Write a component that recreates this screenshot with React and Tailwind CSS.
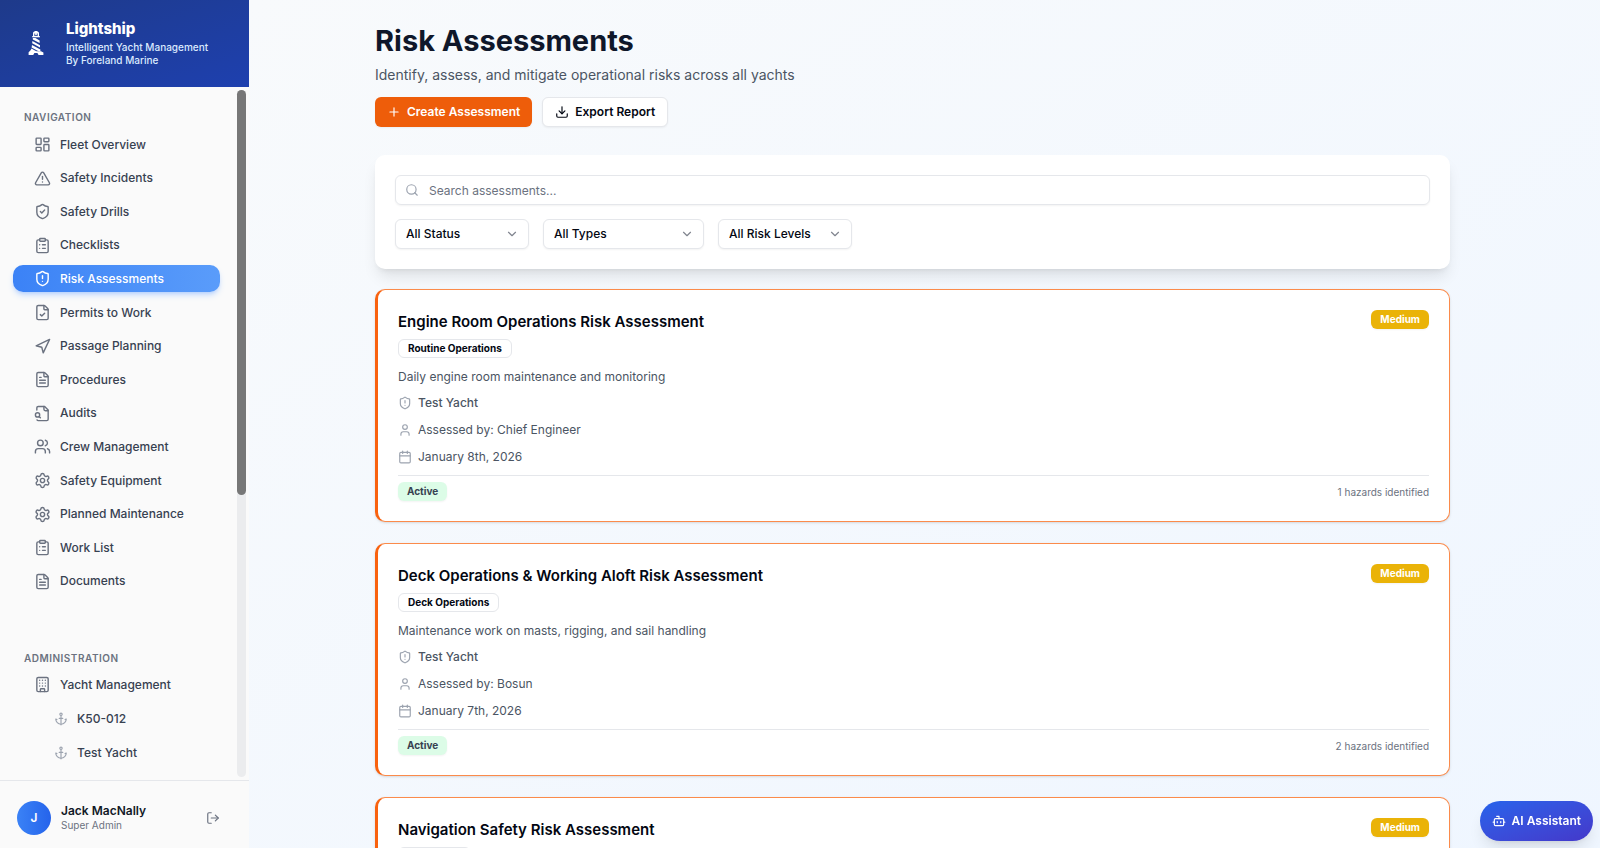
import React, { useState } from "react";
import {
  Anchor,
  Bot,
  Building,
  Calendar,
  ChevronDown,
  ClipboardList,
  Download,
  FileCheck,
  FileText,
  LayoutDashboard,
  LogOut,
  Plus,
  Search,
  Settings,
  ShieldAlert,
  ShieldCheck,
  TriangleAlert,
  User,
  Users,
} from "lucide-react";

const Navigation = ({ className }) => (
  <svg
    className={className}
    viewBox="0 0 24 24"
    fill="none"
    stroke="currentColor"
    strokeWidth="2"
    strokeLinecap="round"
    strokeLinejoin="round">
    <polygon points="3 11 22 2 13 21 11 13 3 11" />
  </svg>
);

const FileMagnifier = ({ className }) => (
  <svg
    className={className}
    viewBox="0 0 24 24"
    fill="none"
    stroke="currentColor"
    strokeWidth="2"
    strokeLinecap="round"
    strokeLinejoin="round">
    <path d="M14 2v4a2 2 0 0 0 2 2h4" />
    <path d="M4.268 21a2 2 0 0 0 1.727 1H18a2 2 0 0 0 2-2V7l-5-5H6a2 2 0 0 0-2 2v3" />
    <path d="m9 18-1.5-1.5" />
    <circle cx="5" cy="14" r="3" />
  </svg>
);

const Lighthouse = () => (
  <svg className="w-4 h-6" viewBox="0 0 16 24" fill="#fff">
    {/* lantern */}
    <path d="M5 1.8C5.6.6 6.8 0 8 0s2.400.6 3 1.800V5H9.600V2.600H8.800V4.200H7.200V2.600H6.400V5H5z" />
    <path d="M4.200 5h7.600v1.300H4.200z" />
    {/* striped tower */}
    <path d="M4.800 7H7.400L11.600 9.600V12L4.800 8.600z" />
    <path d="M4.400 10 12 14.200V16.600L4.200 12.200z" />
    <path d="M4 14 12.400 18.500V20.600L9.500 19.800 3.600 16.400z" />
    {/* rocks */}
    <path d="M.6 24V21.200L2.400 19.600 3.600 17.600 6 19 8.500 20.200H13L15.400 21.400V24H10.600L9.400 22H6.400L5.200 24z" />
  </svg>
);

const navItems = [
  { label: "Fleet Overview", icon: LayoutDashboard },
  { label: "Safety Incidents", icon: TriangleAlert },
  { label: "Safety Drills", icon: ShieldCheck },
  { label: "Checklists", icon: ClipboardList },
  { label: "Risk Assessments", icon: ShieldAlert },
  { label: "Permits to Work", icon: FileCheck },
  { label: "Passage Planning", icon: Navigation },
  { label: "Procedures", icon: FileText },
  { label: "Audits", icon: FileMagnifier },
  { label: "Crew Management", icon: Users },
  { label: "Safety Equipment", icon: Settings },
  { label: "Planned Maintenance", icon: Settings },
  { label: "Work List", icon: ClipboardList },
  { label: "Documents", icon: FileText },
];

const yachts = ["K50-012", "Test Yacht", "Yacht 3"];

const filters = [
  { id: "status", label: "Status", width: "w-[134px]", options: ["All Status", "Active", "Draft"] },
  { id: "type", label: "Type", width: "w-[161px]", options: ["All Types", "Routine Operations", "Deck Operations"] },
  { id: "level", label: "Risk level", width: "w-[134px]", options: ["All Risk Levels", "Low", "Medium", "High"] },
];

const assessments = [
  {
    title: "Engine Room Operations Risk Assessment",
    type: "Routine Operations",
    description: "Daily engine room maintenance and monitoring",
    yacht: "Test Yacht",
    assessor: "Chief Engineer",
    date: "January 8th, 2026",
    hazards: 1,
  },
  {
    title: "Deck Operations & Working Aloft Risk Assessment",
    type: "Deck Operations",
    description: "Maintenance work on masts, rigging, and sail handling",
    yacht: "Test Yacht",
    assessor: "Bosun",
    date: "January 7th, 2026",
    hazards: 2,
  },
  {
    title: "Navigation Safety Risk Assessment",
    type: "Navigation",
    description: "Bridge operations and passage safety",
    yacht: "Test Yacht",
    assessor: "Captain",
    date: "January 6th, 2026",
    hazards: 2,
  },
];

const Sidebar = () => {
  const [active, setActive] = useState("Risk Assessments");

  return (
    <aside className="w-[249px] shrink-0 h-full flex flex-col bg-[#fafafa]">
      <div className="h-[87px] shrink-0 flex items-center gap-[22px] pl-7 pb-[2px] bg-linear-to-br from-[#1e3a8a] to-[#1e40af] text-white">
        <Lighthouse />
        <div>
          <div className="mb-[2px] text-[15px] leading-[20px] font-extrabold">Lightship</div>
          <div className="text-[10px] leading-[13px] font-medium text-[#dbeafe]">Intelligent Yacht Management</div>
          <div className="text-[10px] leading-[13px] font-medium text-[#dbeafe]">By Foreland Marine</div>
        </div>
      </div>

      <div className="flex-1 min-h-0 flex pr-[3px]">
        <nav className="flex-1 overflow-hidden pl-[13px] pr-[17px] pt-[23px]">
          <h2 className="pl-[11px] text-[10px] leading-[14px] font-semibold tracking-wider text-[#6b7280]">
            NAVIGATION
          </h2>
          <ul className="mt-[7px] h-[464px] flex flex-col justify-between">
            {navItems.map(({ label, icon: Icon }) => (
              <li key={label}>
                <button
                  onClick={() => setActive(label)}
                  className={`w-full h-[27px] pl-[21px] flex items-center gap-[9px] rounded-[10px] text-[12px] font-medium ${
                    active === label
                      ? "bg-linear-to-r from-[#3b82f6] to-[#5a9cfa] text-white shadow-md shadow-blue-500/25"
                      : "text-[#374151]"
                  }`}>
                  <Icon className={`w-[17px] h-[17px] ${active === label ? "text-white" : "text-[#6b7280]"}`} />
                  {label}
                </button>
              </li>
            ))}
          </ul>

          <h2 className="mt-[56px] pl-[11px] text-[10px] leading-[14px] font-semibold tracking-wider text-[#6b7280]">
            ADMINISTRATION
          </h2>
          <ul className="mt-[6px] flex flex-col gap-[7px]">
            <li>
              <button className="w-full h-[27px] pl-[21px] flex items-center gap-[9px] text-[12px] font-medium text-[#374151]">
                <Building className="w-[17px] h-[17px] text-[#6b7280]" />
                Yacht Management
              </button>
            </li>
            {yachts.map((yacht) => (
              <li key={yacht}>
                <button className="w-full h-[27px] pl-[41px] flex items-center gap-[9px] text-[12px] font-medium text-[#374151]">
                  <Anchor className="w-[14px] h-[14px] text-[#9ca3af]" />
                  {yacht}
                </button>
              </li>
            ))}
          </ul>
        </nav>
        {/* scroll indicator */}
        <div className="w-[9px] my-[3px] rounded-full bg-[#ebecee]">
          <div className="h-[59%] rounded-full bg-[#777]" />
        </div>
      </div>

      <div className="h-[68px] shrink-0 flex items-center gap-[10px] pl-[17px] pr-[29px] pt-[6px] border-t border-[#e5e7eb]">
        <div className="w-[34px] h-[34px] rounded-full flex items-center justify-center bg-linear-to-r from-[#3b82f6] to-[#2563eb] text-[12px] font-semibold text-white">
          J
        </div>
        <div className="flex-1">
          <div className="text-[12px] leading-[15px] font-semibold text-[#111827]">Jack MacNally</div>
          <div className="text-[10px] leading-[14px] text-[#6b7280]">Super Admin</div>
        </div>
        <button aria-label="Log out" className="text-[#6b7280]">
          <LogOut className="w-[14px] h-[14px]" />
        </button>
      </div>
    </aside>
  );
};

const AssessmentCard = ({ item }) => (
  <article className="p-5 rounded-[10px] bg-white border border-l-[3px] border-[#fb8b4b] border-l-[#f9620f] shadow-sm">
    <div className="flex items-start justify-between">
      <h3 className="text-[15px] leading-[24px] font-semibold text-[#030712]">{item.title}</h3>
      <span className="h-[19px] px-[9px] flex items-center rounded-md bg-[#eab308] text-[10px] font-bold text-white shadow-xs">
        Medium
      </span>
    </div>
    <span className="mt-[5px] w-fit h-[19px] px-[9px] flex items-center rounded-md border border-[#e5e7eb] text-[10px] font-bold text-[#030712]">
      {item.type}
    </span>
    <p className="mt-[10px] text-[12px] leading-[17px] text-[#4b5563]">{item.description}</p>
    <div className="mt-[9px] flex flex-col gap-[10px] text-[12px] leading-[17px] text-[#4b5563]">
      <div className="flex items-center gap-[6px] font-medium">
        <ShieldAlert className="w-[14px] h-[14px] text-[#9ca3af]" />
        {item.yacht}
      </div>
      <div className="flex items-center gap-[6px]">
        <User className="w-[14px] h-[14px] text-[#9ca3af]" />
        Assessed by: {item.assessor}
      </div>
      <div className="flex items-center gap-[6px]">
        <Calendar className="w-[14px] h-[14px] text-[#9ca3af]" />
        {item.date}
      </div>
    </div>
    <div className="mt-[10px] pt-[6px] flex items-center justify-between border-t border-[#e5e7eb]">
      <span className="h-[19px] px-[9px] flex items-center rounded-md bg-[#dcfce7] text-[10px] font-bold text-[#374151] shadow-xs">
        Active
      </span>
      <span className="text-[10px] leading-[14px] text-[#6b7280]">{item.hazards} hazards identified</span>
    </div>
  </article>
);

const App = () => {
  const [query, setQuery] = useState("");

  return (
    <div className="h-screen flex overflow-hidden font-['Inter',sans-serif] antialiased">
      <Sidebar />
      <main className="flex-1 overflow-hidden pr-6 bg-linear-to-br from-[#f8fafc] to-[#eff6ff]">
        <div className="max-w-[1075px] mx-auto pt-[22px]">
          <h1 className="text-[29px] leading-[38px] font-bold text-[#0f172a]">Risk Assessments</h1>
          <p className="mt-[3px] text-[14px] leading-[24px] text-[#4b5563]">
            Identify, assess, and mitigate operational risks across all yachts
          </p>
          <div className="mt-[10px] flex gap-[10px]">
            <button className="h-[30px] px-3 flex items-center gap-[6px] rounded-md bg-[#ee5d0a] text-[12px] font-semibold text-white shadow-xs">
              <Plus className="w-[14px] h-[14px]" />
              Create Assessment
            </button>
            <button className="h-[30px] px-3 flex items-center gap-[6px] rounded-md border border-[#e5e7eb] bg-white text-[12px] font-semibold text-[#030712] shadow-xs">
              <Download className="w-[14px] h-[14px]" />
              Export Report
            </button>
          </div>

          <section className="mt-[28px] p-5 rounded-[10px] bg-white shadow-lg">
            <div className="relative">
              <Search className="absolute left-[10px] top-[8px] w-[14px] h-[14px] text-[#9ca3af]" />
              <input
                type="text"
                aria-label="Search assessments"
                placeholder="Search assessments..."
                value={query}
                onChange={(e) => setQuery(e.target.value)}
                className="block w-full h-[30px] pl-[33px] pr-3 rounded-md border border-[#e5e7eb] text-[12px] text-[#111827] placeholder:text-[#6b7280] shadow-xs"
              />
            </div>
            <div className="mt-[14px] flex gap-[14px]">
              {filters.map((filter) => (
                <div key={filter.id} className={`relative ${filter.width}`}>
                  <select
                    id={filter.id}
                    aria-label={filter.label}
                    className="block w-full h-[30px] pl-[10px] appearance-none rounded-md border border-[#e5e7eb] bg-white text-[12px] font-medium text-[#030712] shadow-xs">
                    {filter.options.map((option) => (
                      <option key={option}>{option}</option>
                    ))}
                  </select>
                  <ChevronDown className="absolute right-[10px] top-[8px] w-[14px] h-[14px] text-[#81858f] pointer-events-none" />
                </div>
              ))}
            </div>
          </section>

          <div className="mt-5 flex flex-col gap-[21px]">
            {assessments.map((item) => (
              <AssessmentCard key={item.title} item={item} />
            ))}
          </div>
        </div>
      </main>

      <button className="fixed right-[7px] bottom-[7px] h-10 px-3 flex items-center gap-[6px] rounded-full bg-linear-to-br from-[#2563eb] to-[#4338ca] text-[12px] font-semibold text-white shadow-lg">
        <Bot className="w-[14px] h-[14px]" />
        AI Assistant
      </button>
    </div>
  );
};

export default App;
